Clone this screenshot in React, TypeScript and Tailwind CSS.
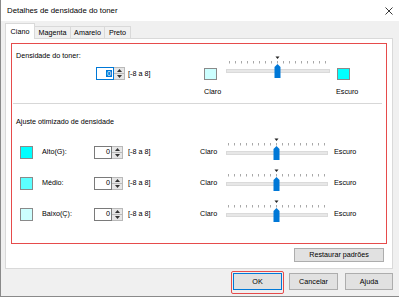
import React from 'react';

const font = "font-['Liberation_Sans',Arial,sans-serif]";

const Slider: React.FC<{ w: number }> = ({ w }) => {
  const mid = Math.round(w / 2) - 0.5;
  const ticks = Array.from({ length: 17 }, (_, i) => mid - 48 + i * 6);
  return (
    <svg width={w} height={30} className="block shrink-0">
      <polygon points={`${mid - 2},1.5 ${mid + 2},1.5 ${mid},4`} fill="#222" />
      {ticks.map((x) => (
        <line key={x} x1={x} x2={x} y1={6} y2={8.5} stroke="#a8a8a8" strokeWidth={1} />
      ))}
      <rect x={2.5} y={14.5} width={w - 5} height={3} fill="#e7e7e7" stroke="#dadada" strokeWidth={1} />
      <path d={`M${mid - 3} 12 L${mid} 9 L${mid + 3} 12 V23 H${mid - 3} Z`} fill="#0078d7" />
    </svg>
  );
};

const Spin: React.FC<{ focused?: boolean }> = ({ focused }) => (
  <div className="flex h-[13px] w-[29px] shrink-0">
    <div
      className={`flex h-full w-[18px] items-center justify-end border pr-[1px] text-[7.2px] leading-none ${
        focused ? 'border-[#0078d7]' : 'border-[#7a7a7a]'
      }`}
    >
      {focused ? <span className="bg-[#0078d7] px-[1px] text-white">0</span> : <span>0</span>}
    </div>
    <div className="flex h-full w-[11px] flex-col border border-l-0 border-[#b9b9b9] bg-[#e6e6e6]">
      <div className="flex flex-1 items-center justify-center border-b border-[#b9b9b9]">
        <svg width={5} height={3}>
          <polygon points="0,3 5,3 2.5,0" fill="#333" />
        </svg>
      </div>
      <div className="flex flex-1 items-center justify-center">
        <svg width={5} height={3}>
          <polygon points="0,0 5,0 2.5,3" fill="#333" />
        </svg>
      </div>
    </div>
  </div>
);

const Btn: React.FC<{ label: string; w: string; def?: boolean }> = ({ label, w, def }) => (
  <div
    className={`flex h-[17px] ${w} items-center justify-center border bg-[#e1e1e1] text-[7.2px] text-black ${
      def ? 'border-[#0078d7]' : 'border-[#adadad]'
    }`}
  >
    {label}
  </div>
);

const rows = [
  { label: 'Alto(G):', color: 'bg-[#00ffff]' },
  { label: 'Médio:', color: 'bg-[#5cffff]' },
  { label: 'Baixo(Ç):', color: 'bg-[#ccffff]' },
];

const tabs = [
  { label: 'Magenta', w: 'w-[37px]' },
  { label: 'Amarelo', w: 'w-[35px]' },
  { label: 'Preto', w: 'w-[27px]' },
];

export default function App() {
  return (
    <div className={`${font} flex h-[297px] w-[399px] flex-col overflow-hidden border-b border-l border-[#8a8a8a] bg-[#f0f0f0] text-[7.2px] leading-[10px] text-black`}>
      {/* title bar */}
      <div className="flex h-[21px] shrink-0 items-center justify-between bg-white pl-[6px] pr-[6px]">
        <span className="text-[7.8px]">Detalhes de densidade do toner</span>
        <svg width={8} height={8}>
          <path d="M0.5 0.5 L7.5 7.5 M7.5 0.5 L0.5 7.5" stroke="#222" strokeWidth={0.9} />
        </svg>
      </div>

      <div className="flex flex-col pl-[4px] pr-[6px] pt-[2px]">
        {/* tabs */}
        <div className="flex h-[15px] items-end">
          <div className="relative z-10 -mb-px flex h-[16px] w-[30px] items-center justify-center border border-b-0 border-[#d9d9d9] bg-white">
            Ciano
          </div>
          {tabs.map((t) => (
            <div
              key={t.label}
              className={`-ml-px flex h-[12px] ${t.w} items-center justify-center border border-b-0 border-[#d9d9d9] bg-[#f0f0f0]`}
            >
              {t.label}
            </div>
          ))}
        </div>

        {/* panel */}
        <div className="flex h-[231px] flex-col border border-[#d9d9d9] bg-white">
          <div className="ml-[5px] mt-[4px] flex h-[201px] w-[376px] flex-col border border-[#e64b4b]">
            {/* toner density */}
            <div className="flex">
              <div className="flex w-[192px] flex-col">
                <div className="pl-[4px] pt-[7px]">Densidade do toner:</div>
                <div className="mt-[6px] flex items-center pl-[84px]">
                  <Spin focused />
                  <span className="ml-[3px]">[-8 a 8]</span>
                </div>
              </div>
              <div className="flex flex-col pt-[11px]">
                <div className="flex items-start">
                  <div className="mt-[13px] h-[12px] w-[13px] border border-[#8a8a8a] bg-[#ccffff]" />
                  <div className="ml-[7px]">
                    <Slider w={108} />
                  </div>
                  <div className="ml-[5px] mt-[13px] h-[12px] w-[13px] border border-[#8a8a8a] bg-[#00ffff]" />
                </div>
                <div className="mt-[2px] flex">
                  <span className="w-[132px]">Claro</span>
                  <span>Escuro</span>
                </div>
              </div>
            </div>

            <div className="ml-[1px] mr-[4px] mt-[6px] h-px bg-[#d7d7d7]" />

            {/* optimized adjust */}
            <div className="mt-[13px] pl-[4px]">Ajuste otimizado de densidade</div>
            <div className="mt-[10px] flex flex-col gap-[1px]">
              {rows.map((r) => (
                <div key={r.label} className="flex h-[30px] items-center">
                  <div className={`ml-[8px] h-[13px] w-[13px] border border-[#8a8a8a] ${r.color}`} />
                  <span className="ml-[9px] w-[52px]">{r.label}</span>
                  <Spin />
                  <span className="ml-[5px] w-[72px]">[-8 a 8]</span>
                  <span className="w-[24px]">Claro</span>
                  <Slider w={106} />
                  <span className="ml-[4px]">Escuro</span>
                </div>
              ))}
            </div>
          </div>

          <div className="mr-[8px] mt-[4px] self-end">
            <div className="flex h-[14px] w-[90px] items-center justify-center border border-[#adadad] bg-[#e1e1e1]">
              Restaurar padrões
            </div>
          </div>
        </div>

        {/* footer */}
        <div className="mt-[2px] flex items-start justify-end">
          <div className="rounded-[2px] border border-[#e64b4b] px-px pb-[3px] pt-px">
            <Btn label="OK" w="w-[49px]" def />
          </div>
          <div className="ml-[5px] mt-[2px]">
            <Btn label="Cancelar" w="w-[49px]" />
          </div>
          <div className="ml-[7px] mt-[2px]">
            <Btn label="Ajuda" w="w-[48px]" />
          </div>
        </div>
      </div>
    </div>
  );
}
